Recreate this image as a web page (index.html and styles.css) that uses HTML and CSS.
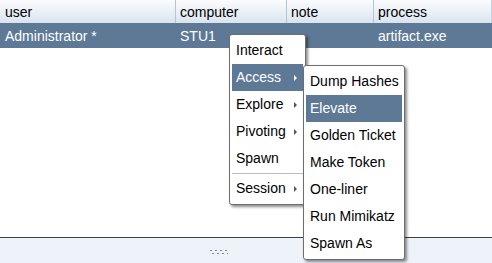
FILE: index.html
```html
<!DOCTYPE html>
<html lang="en">
<head>
    <meta charset="UTF-8">
    <title>Sessions</title>
    <link rel="stylesheet" href="styles.css">
</head>
<body>
    <div class="table">
        <div class="table-head">
            <div class="cell">user</div>
            <div class="cell">computer</div>
            <div class="cell">note</div>
            <div class="cell">process</div>
        </div>
        <div class="table-row selected">
            <div class="cell">Administrator *</div>
            <div class="cell">STU1</div>
            <div class="cell"></div>
            <div class="cell">artifact.exe</div>
        </div>
    </div>

    <div class="spacer"></div>

    <div class="bottom-panel">
        <svg class="grip" width="20" height="5" viewBox="0 0 20 5">
            <g fill="#7d8ca3">
                <rect x="1" y="0" width="2" height="1"/>
                <rect x="6" y="0" width="2" height="1"/>
                <rect x="11" y="0" width="2" height="1"/>
                <rect x="16" y="0" width="2" height="1"/>
                <rect x="3" y="3" width="2" height="1"/>
                <rect x="8" y="3" width="2" height="1"/>
                <rect x="13" y="3" width="2" height="1"/>
                <rect x="18" y="3" width="1" height="1"/>
            </g>
        </svg>
    </div>

    <!-- context menu -->
    <div class="menu main-menu">
        <div class="menu-item">Interact</div>
        <div class="menu-item has-sub active">Access</div>
        <div class="menu-item has-sub">Explore</div>
        <div class="menu-item has-sub">Pivoting</div>
        <div class="menu-item">Spawn</div>
        <div class="menu-sep"></div>
        <div class="menu-item has-sub">Session</div>
    </div>

    <div class="menu sub-menu">
        <div class="menu-item">Dump Hashes</div>
        <div class="menu-item active">Elevate</div>
        <div class="menu-item">Golden Ticket</div>
        <div class="menu-item">Make Token</div>
        <div class="menu-item">One-liner</div>
        <div class="menu-item">Run Mimikatz</div>
        <div class="menu-item">Spawn As</div>
    </div>
</body>
</html>
```

FILE: styles.css
```css
body {
    margin: 0;
    height: 100vh;
    display: flex;
    flex-direction: column;
    font-family: "Liberation Sans", Arial, sans-serif;
    font-size: 14px;
    color: #000;
    background-color: #fff;
    position: relative;
    overflow: hidden;
}

.table-head,
.table-row {
    display: grid;
    grid-template-columns: 175px 111px 87px 1fr;
}

.table-head {
    height: 23px;
    background: linear-gradient(#fbfcfe, #dae4ef);
    border-right: 1px solid #c4d2e2;
}

.table-head .cell {
    display: flex;
    align-items: center;
    padding-left: 5px;
}

.table-head .cell + .cell {
    border-left: 1px solid #b4c5d9;
    padding-left: 4px;
}

.table-row {
    height: 25px;
}

.table-row .cell {
    display: flex;
    align-items: center;
    padding-left: 5px;
}

.table-row.selected {
    background-color: #5d7996;
    color: #fff;
}

.spacer {
    flex-grow: 1;
}

.bottom-panel {
    height: 26px;
    box-sizing: border-box;
    border-top: 1px solid #404040;
    background-color: #eef2f9;
    display: flex;
    justify-content: center;
    padding-top: 12px;
}

.grip {
    display: block;
    margin-left: -54px;
}

/* Context menus */
.menu {
    position: absolute;
    background-color: #fff;
    border: 1px solid #6e6e6e;
    border-radius: 3px;
    padding: 2px;
    box-shadow: 2px 2px 3px rgba(0, 0, 0, 0.45);
}

.main-menu {
    left: 229px;
    top: 34px;
    width: 71px;
}

.sub-menu {
    left: 303px;
    top: 65px;
    width: 96px;
}

.menu-item {
    height: 27px;
    line-height: 27px;
    padding-left: 4px;
    position: relative;
    white-space: nowrap;
}

.menu-item.active {
    background-color: #5d7996;
    color: #fff;
}

.menu-item.has-sub::after {
    content: "";
    position: absolute;
    right: 6px;
    top: 11px;
    border-left: 3px solid #555;
    border-top: 3px solid transparent;
    border-bottom: 3px solid transparent;
}

.menu-item.has-sub.active::after {
    border-left-color: #fff;
}

.menu-sep {
    height: 1px;
    margin-bottom: 1px;
    background-color: #bdbdbd;
    border-top: 1px solid #fff;
}
```
